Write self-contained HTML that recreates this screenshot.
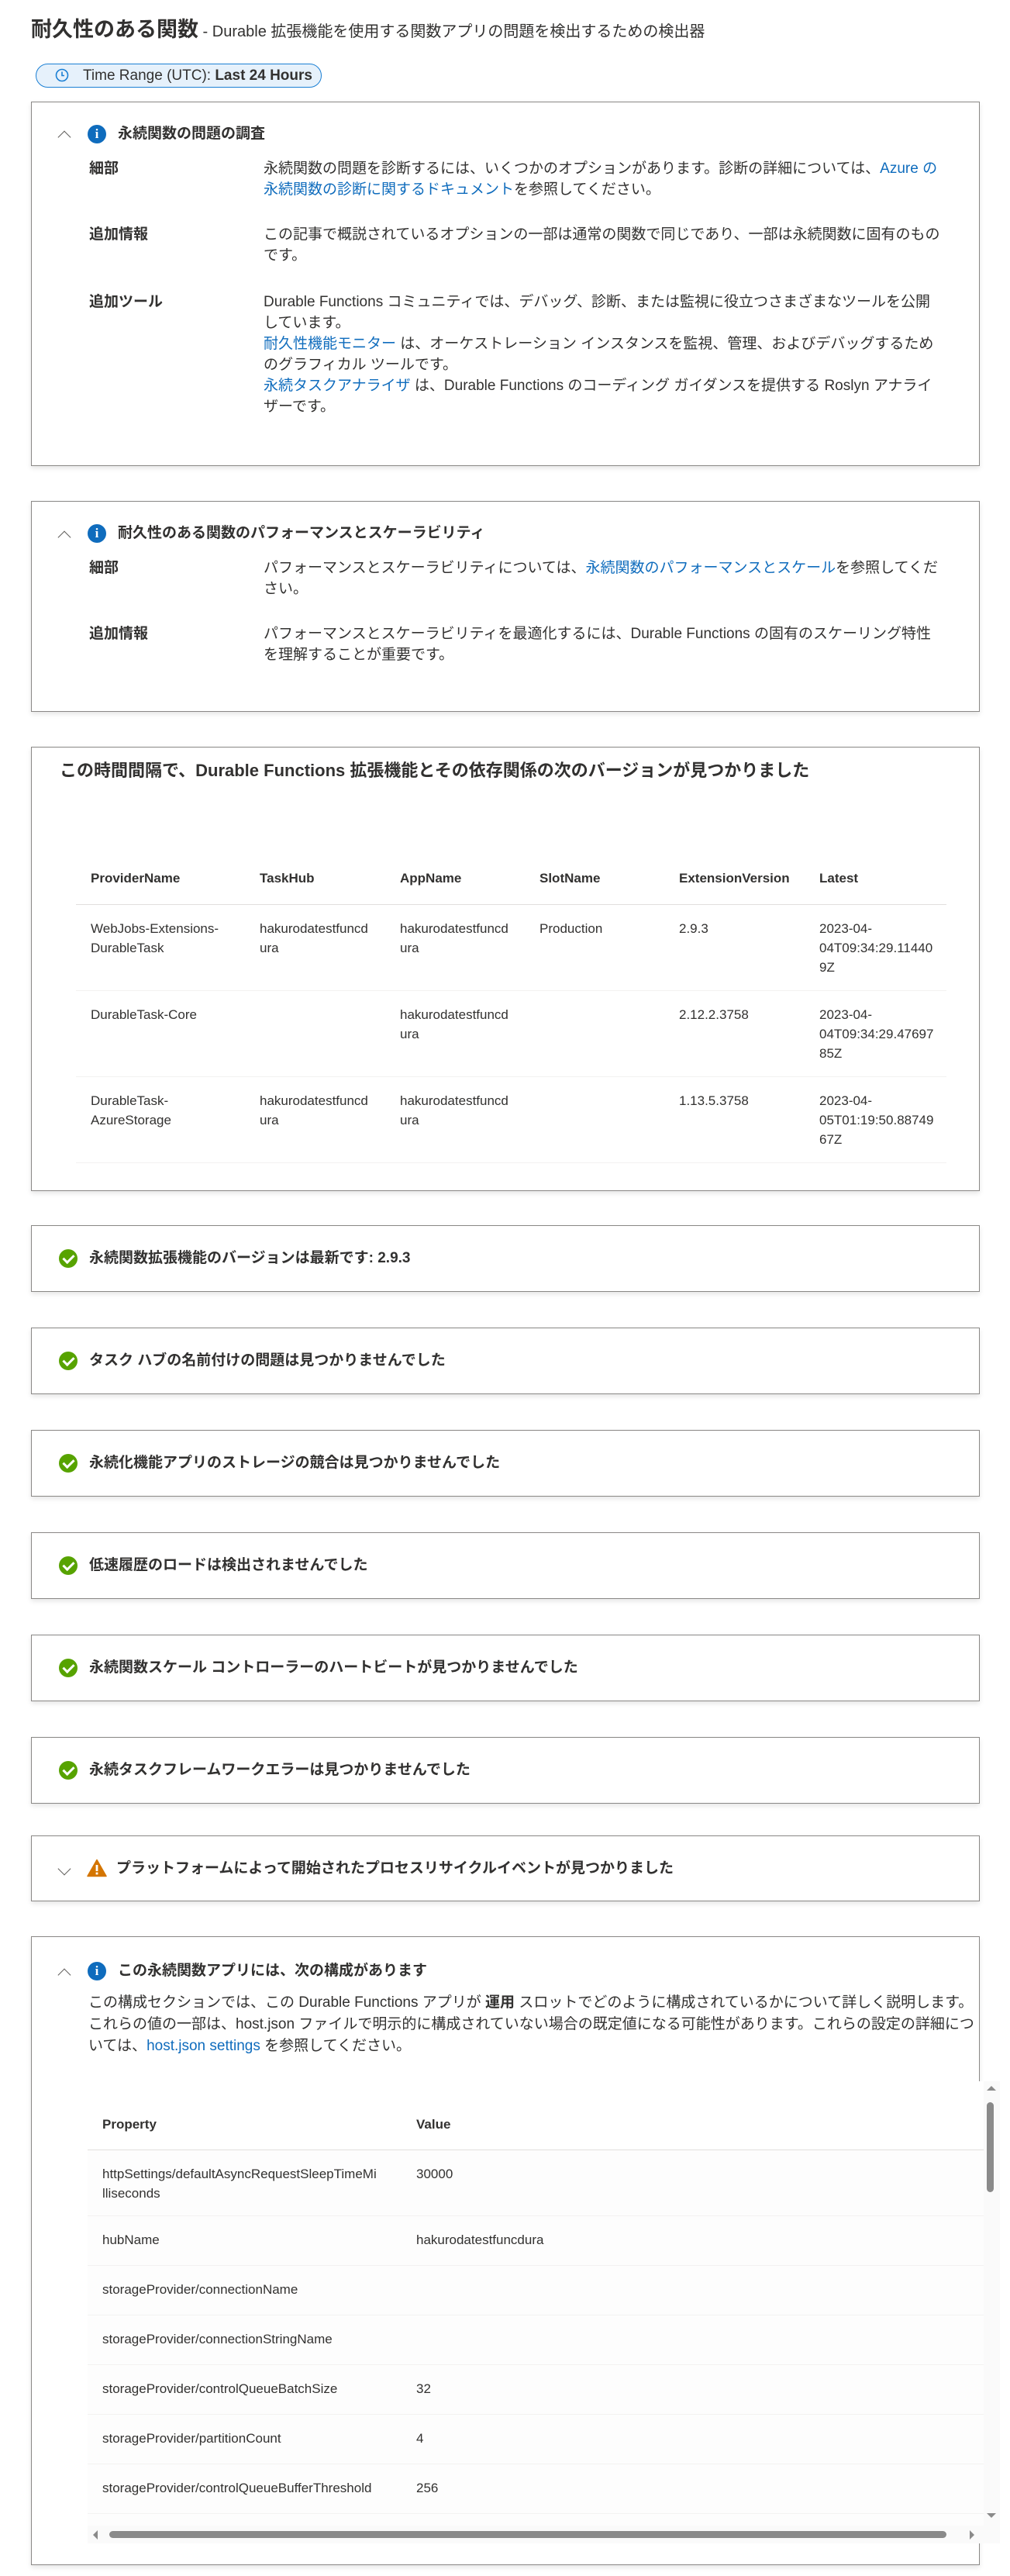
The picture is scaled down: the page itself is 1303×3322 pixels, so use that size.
<!DOCTYPE html>
<html><head><meta charset="utf-8">
<style>
*{box-sizing:border-box;margin:0;padding:0}
body{width:1303px;height:3322px;background:#fff;position:relative;overflow:hidden;font-family:"Liberation Sans","Noto Sans CJK JP",sans-serif;color:#323130}
.abs{position:absolute}
.card{position:absolute;left:40px;width:1224px;border:1px solid #8a8886;background:#fff;box-shadow:0 3px 6px rgba(0,0,0,0.10)}
.t{position:absolute;font-size:19px;line-height:27px;white-space:nowrap}
.b{font-weight:bold}
a{color:#0f6cbd;text-decoration:none}
.chev{position:absolute;width:12px;height:12px;border-left:1.5px solid #605e5c;border-top:1.5px solid #605e5c}
.up{transform:rotate(45deg)}
.down{transform:rotate(225deg)}
.info{position:absolute;width:24px;height:24px;border-radius:50%;background:#0f6cbd;color:#fff;font:bold 17px/24px "Liberation Serif",serif;text-align:center}
.ok{position:absolute;width:24px;height:24px;border-radius:50%;background:#57a300}
.ok:after{content:"";position:absolute;left:8px;top:4px;width:6px;height:11px;border-right:3px solid #fff;border-bottom:3px solid #fff;transform:rotate(45deg)}
table{border-collapse:collapse;table-layout:fixed;font-size:17px;line-height:25px}
td,th{text-align:left;vertical-align:top;white-space:nowrap;overflow:hidden;padding-left:19px}
th{font-weight:bold}
</style></head><body>

<div class="abs" style="left:40px;top:20px;white-space:nowrap;line-height:36px">
<span style="font-size:27px;font-weight:bold">耐久性のある関数</span><span style="font-size:20px"> - Durable 拡張機能を使用する関数アプリの問題を検出するための検出器</span></div>

<div class="abs" style="left:46px;top:82px;width:369px;height:31px;border:1.5px solid #1a7fd4;border-radius:16px;background:#e6f1fb"></div>
<svg class="abs" style="left:70px;top:87px" width="20" height="20" viewBox="0 0 20 20"><circle cx="10" cy="10" r="7.5" fill="none" stroke="#1a7fd4" stroke-width="1.6"/><path d="M10 5.5V10.5H13" fill="none" stroke="#1a7fd4" stroke-width="1.6"/></svg>
<div class="abs" style="left:107px;top:84px;font-size:19px;line-height:27px;white-space:nowrap">Time Range (UTC): <b>Last 24 Hours</b></div>

<!-- card 1 -->
<div class="card" style="top:131px;height:470px"></div>
<div class="chev up" style="left:77px;top:171px"></div>
<div class="info" style="left:113px;top:161px">i</div>
<div class="t b" style="left:152px;top:159px">永続関数の問題の調査</div>
<div class="t b" style="left:115px;top:204px">細部</div>
<div class="t" style="left:340px;top:204px">永続関数の問題を診断するには、いくつかのオプションがあります。診断の詳細については、<a>Azure の</a><br><a>永続関数の診断に関するドキュメント</a>を参照してください。</div>
<div class="t b" style="left:115px;top:289px">追加情報</div>
<div class="t" style="left:340px;top:289px">この記事で概説されているオプションの一部は通常の関数で同じであり、一部は永続関数に固有のもの<br>です。</div>
<div class="t b" style="left:115px;top:376px">追加ツール</div>
<div class="t" style="left:340px;top:376px">Durable Functions コミュニティでは、デバッグ、診断、または監視に役立つさまざまなツールを公開<br>しています。<br><a>耐久性機能モニター</a> は、オーケストレーション インスタンスを監視、管理、およびデバッグするため<br>のグラフィカル ツールです。<br><a>永続タスクアナライザ</a> は、Durable Functions のコーディング ガイダンスを提供する Roslyn アナライ<br>ザーです。</div>

<!-- card 2 -->
<div class="card" style="top:646px;height:272px"></div>
<div class="chev up" style="left:77px;top:687px"></div>
<div class="info" style="left:113px;top:676px">i</div>
<div class="t b" style="left:152px;top:674px">耐久性のある関数のパフォーマンスとスケーラビリティ</div>
<div class="t b" style="left:115px;top:719px">細部</div>
<div class="t" style="left:340px;top:719px">パフォーマンスとスケーラビリティについては、<a>永続関数のパフォーマンスとスケール</a>を参照してくだ<br>さい。</div>
<div class="t b" style="left:115px;top:804px">追加情報</div>
<div class="t" style="left:340px;top:804px">パフォーマンスとスケーラビリティを最適化するには、Durable Functions の固有のスケーリング特性<br>を理解することが重要です。</div>

<!-- card 3 -->
<div class="card" style="top:963px;height:573px"></div>
<div class="abs b" style="left:77px;top:978px;font-size:22px;line-height:32px;white-space:nowrap">この時間間隔で、Durable Functions 拡張機能とその依存関係の次のバージョンが見つかりました</div>
<table class="abs" style="left:98px;top:1106px;width:1123px">
<colgroup><col style="width:218px"><col style="width:181px"><col style="width:180px"><col style="width:180px"><col style="width:181px"><col style="width:183px"></colgroup>
<tr style="border-bottom:1px solid #e1dfdd;height:60px"><th style="padding-top:14px">ProviderName</th><th style="padding-top:14px">TaskHub</th><th style="padding-top:14px">AppName</th><th style="padding-top:14px">SlotName</th><th style="padding-top:14px">ExtensionVersion</th><th style="padding-top:14px">Latest</th></tr>
<tr style="border-bottom:1px solid #f3f2f1;height:111px"><td style="padding-top:18px">WebJobs-Extensions-<br>DurableTask</td><td style="padding-top:18px">hakurodatestfuncd<br>ura</td><td style="padding-top:18px">hakurodatestfuncd<br>ura</td><td style="padding-top:18px">Production</td><td style="padding-top:18px">2.9.3</td><td style="padding-top:18px">2023-04-<br>04T09:34:29.11440<br>9Z</td></tr>
<tr style="border-bottom:1px solid #f3f2f1;height:111px"><td style="padding-top:18px">DurableTask-Core</td><td></td><td style="padding-top:18px">hakurodatestfuncd<br>ura</td><td></td><td style="padding-top:18px">2.12.2.3758</td><td style="padding-top:18px">2023-04-<br>04T09:34:29.47697<br>85Z</td></tr>
<tr style="border-bottom:1px solid #f3f2f1;height:111px"><td style="padding-top:18px">DurableTask-<br>AzureStorage</td><td style="padding-top:18px">hakurodatestfuncd<br>ura</td><td style="padding-top:18px">hakurodatestfuncd<br>ura</td><td></td><td style="padding-top:18px">1.13.5.3758</td><td style="padding-top:18px">2023-04-<br>05T01:19:50.88749<br>67Z</td></tr>
</table>

<!-- status cards -->
<div class="card" style="top:1580px;height:86px"></div>
<div class="ok" style="left:76px;top:1611px"></div>
<div class="t b" style="left:115px;top:1609px">永続関数拡張機能のバージョンは最新です: 2.9.3</div>

<div class="card" style="top:1712px;height:86px"></div>
<div class="ok" style="left:76px;top:1743px"></div>
<div class="t b" style="left:115px;top:1741px">タスク ハブの名前付けの問題は見つかりませんでした</div>

<div class="card" style="top:1844px;height:86px"></div>
<div class="ok" style="left:76px;top:1875px"></div>
<div class="t b" style="left:115px;top:1873px">永続化機能アプリのストレージの競合は見つかりませんでした</div>

<div class="card" style="top:1976px;height:86px"></div>
<div class="ok" style="left:76px;top:2007px"></div>
<div class="t b" style="left:115px;top:2005px">低速履歴のロードは検出されませんでした</div>

<div class="card" style="top:2108px;height:86px"></div>
<div class="ok" style="left:76px;top:2139px"></div>
<div class="t b" style="left:115px;top:2137px">永続関数スケール コントローラーのハートビートが見つかりませんでした</div>

<div class="card" style="top:2240px;height:86px"></div>
<div class="ok" style="left:76px;top:2271px"></div>
<div class="t b" style="left:115px;top:2269px">永続タスクフレームワークエラーは見つかりませんでした</div>

<div class="card" style="top:2367px;height:85px"></div>
<div class="chev down" style="left:77px;top:2404px"></div>
<svg class="abs" style="left:112px;top:2397px" width="26" height="24" viewBox="0 0 26 24"><path d="M13 1.5L25 22.5H1Z" fill="#d47500" stroke="#d47500" stroke-width="1.5" stroke-linejoin="round"/><rect x="11.6" y="8" width="2.8" height="8" fill="#fff"/><rect x="11.6" y="17.6" width="2.8" height="2.8" fill="#fff"/></svg>
<div class="t b" style="left:150px;top:2396px">プラットフォームによって開始されたプロセスリサイクルイベントが見つかりました</div>

<!-- last card -->
<div class="card" style="top:2497px;height:811px"></div>
<div class="chev up" style="left:77px;top:2541px"></div>
<div class="info" style="left:113px;top:2530px">i</div>
<div class="t b" style="left:152px;top:2528px">この永続関数アプリには、次の構成があります</div>
<div class="abs" style="left:114px;top:2569px;width:1180px;overflow:hidden;font-size:19px;line-height:28px;white-space:nowrap">この構成セクションでは、この Durable Functions アプリが <b>運用</b> スロットでどのように構成されているかについて詳しく説明します。<br>これらの値の一部は、host.json ファイルで明示的に構成されていない場合の既定値になる可能性があります。これらの設定の詳細につ<br>いては、<a>host.json settings</a> を参照してください。</div>

<div class="abs" style="left:113px;top:2684px;width:1156px;height:573px;overflow:hidden;background:#fcfcfc">
<table style="width:1156px;background:#fff">
<colgroup><col style="width:405px"><col></colgroup>
<tr style="border-bottom:1.5px solid #e1dfdd;height:88px"><th style="padding-top:43px">Property</th><th style="padding-top:43px">Value</th></tr>
<tr style="border-bottom:1px solid #f3f2f1;height:85px;background:#fdfdfd"><td style="padding-top:18px">httpSettings/defaultAsyncRequestSleepTimeMi<br>lliseconds</td><td style="padding-top:18px">30000</td></tr>
<tr style="border-bottom:1px solid #f3f2f1;height:64px;background:#fdfdfd"><td style="padding-top:18px">hubName</td><td style="padding-top:18px">hakurodatestfuncdura</td></tr>
<tr style="border-bottom:1px solid #f3f2f1;height:64px;background:#fdfdfd"><td style="padding-top:18px">storageProvider/connectionName</td><td></td></tr>
<tr style="border-bottom:1px solid #f3f2f1;height:64px;background:#fdfdfd"><td style="padding-top:18px">storageProvider/connectionStringName</td><td></td></tr>
<tr style="border-bottom:1px solid #f3f2f1;height:64px;background:#fdfdfd"><td style="padding-top:18px">storageProvider/controlQueueBatchSize</td><td style="padding-top:18px">32</td></tr>
<tr style="border-bottom:1px solid #f3f2f1;height:64px;background:#fdfdfd"><td style="padding-top:18px">storageProvider/partitionCount</td><td style="padding-top:18px">4</td></tr>
<tr style="border-bottom:1px solid #f3f2f1;height:64px;background:#fdfdfd"><td style="padding-top:18px">storageProvider/controlQueueBufferThreshold</td><td style="padding-top:18px">256</td></tr>
<tr style="height:64px;background:#fdfdfd"><td style="padding-top:18px">storageProvider/maxQueuePollingInterval</td><td></td></tr>
</table>
</div>
<!-- vertical scrollbar -->
<div class="abs" style="left:1269px;top:2684px;width:21px;height:596px;background:#fafafa"></div>
<svg class="abs" style="left:1271px;top:2688px" width="16" height="10"><path d="M2 8L8 2L14 8Z" fill="#8a8a8a"/></svg>
<div class="abs" style="left:1273px;top:2711px;width:9px;height:116px;border-radius:5px;background:#8a8a8a"></div>
<svg class="abs" style="left:1271px;top:3239px" width="16" height="10"><path d="M2 2L8 8L14 2Z" fill="#8a8a8a"/></svg>
<!-- horizontal scrollbar -->
<div class="abs" style="left:113px;top:3257px;width:1156px;height:23px;background:#fafafa"></div>
<svg class="abs" style="left:118px;top:3261px" width="10" height="16"><path d="M8 2L2 8L8 14Z" fill="#8a8a8a"/></svg>
<div class="abs" style="left:141px;top:3264px;width:1080px;height:9px;border-radius:5px;background:#8a8a8a"></div>
<svg class="abs" style="left:1249px;top:3261px" width="10" height="16"><path d="M2 2L8 8L2 14Z" fill="#8a8a8a"/></svg>

</body></html>
